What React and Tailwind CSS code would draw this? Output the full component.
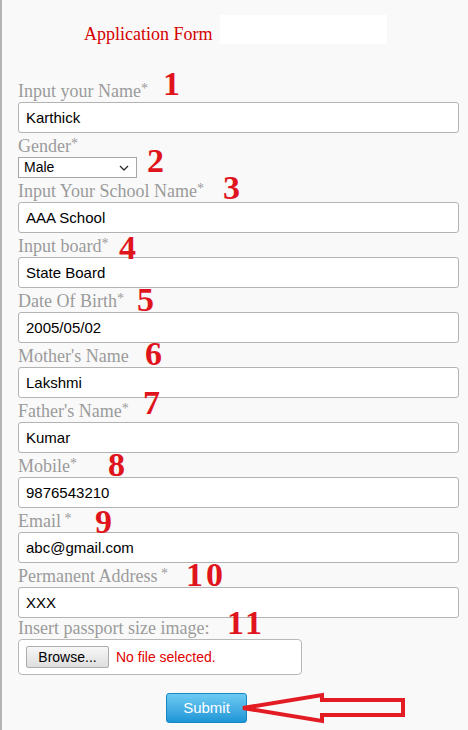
import React from "react";

const serif = "font-['Liberation_Serif',serif]";
const sans = "font-['Liberation_Sans',sans-serif]";

function Num({ children, cls }) {
  return (
    <span
      className={`absolute ${serif} font-bold text-[34px] leading-[34px] text-[#e0141c] ${cls}`}
    >
      {children}
    </span>
  );
}

function Label({ text, star, numCls, num, mt = "mt-[3px]" }) {
  return (
    <div
      className={`relative ${mt} h-[20px] whitespace-nowrap ${serif} text-[18px] leading-[20px] text-[#9b9b9b]`}
    >
      {text}
      {star && <span className="relative top-[-4px] text-[14px]">{star}</span>}
      {num && <Num cls={numCls}>{num}</Num>}
    </div>
  );
}

function Field({ value }) {
  return (
    <input
      readOnly
      defaultValue={value}
      className={`mt-px block h-[31px] w-full rounded-[3px] border border-[#b3b3b3] bg-white px-[7px] ${sans} text-[15px] text-black outline-none`}
    />
  );
}

export default function App() {
  return (
    <div className="min-h-[730px] w-[468px] border-l-2 border-[#b4b4b4] bg-[#f9f9f9] pl-[16px] pr-[9px]">
      <div className="flex h-[78px]">
        <div
          className={`ml-[66px] mt-[24px] w-[136px] whitespace-nowrap ${serif} text-[18px] leading-[20px] text-[#d40000]`}
        >
          Application Form
        </div>
        <div className="mt-[15px] h-[29px] w-[167px] bg-white" />
      </div>

      <Label text="Input your Name" star="*" num="1" numCls="left-[145px] top-[-14px]" />
      <Field value="Karthick" />

      <Label text="Gender" star="*" num="2" numCls="left-[129px] top-[8px]" />
      <div
        className={`mt-px mb-[2px] flex h-[21px] w-[119px] items-center justify-between border border-[#a6a6a6] bg-white pl-[5px] pr-[7px] ${sans} text-[14px] text-black`}
      >
        <span>Male</span>
        <svg width="10" height="6" viewBox="0 0 10 6" fill="none">
          <path d="M1 1l4 4 4-4" stroke="#333" strokeWidth="1.4" />
        </svg>
      </div>

      <Label text="Input Your School Name" star="*" num="3" numCls="left-[205px] top-[-10px]" />
      <Field value="AAA School" />

      <Label text="Input board" star="*" num="4" numCls="left-[101px] top-[-5px]" />
      <Field value="State Board" />

      <Label text="Date Of Birth" star="*" num="5" numCls="left-[119px] top-[-8px]" />
      <Field value="2005/05/02" />

      <Label text="Mother's Name" num="6" numCls="left-[127px] top-[-9px]" />
      <Field value="Lakshmi" />

      <Label text="Father's Name" star="*" num="7" numCls="left-[125px] top-[-15px]" />
      <Field value="Kumar" />

      <Label text="Mobile" star="*" num="8" numCls="left-[90px] top-[-8px]" />
      <Field value="9876543210" />

      <Label text="Email" star={"\u00a0*"} num="9" numCls="left-[77px] top-[-6px]" />
      <Field value="abc@gmail.com" />

      <Label text="Permanent Address" star={"\u00a0*"} num="10" numCls="left-[168px] top-[-8px] tracking-[3px]" />
      <Field value="XXX" />

      <Label
        text="Insert passport size image:"
        num="11"
        mt="mt-0"
        numCls="left-[209px] top-[-12px] tracking-[3px]"
      />
      <div
        className={`mt-px flex h-[36px] w-[284px] items-center rounded-[4px] border border-[#b8b8b8] bg-white pl-[7px] ${sans}`}
      >
        <div className="flex h-[22px] w-[83px] items-center justify-center rounded-[2px] border border-[#acacac] bg-linear-to-b from-[#f7f7f7] to-[#dedede] text-[14px] text-black">
          Browse...
        </div>
        <span className="ml-[7px] text-[14px] text-[#e00000]">No file selected.</span>
      </div>

      <div className="relative mt-[18px] h-[30px]">
        <div
          className={`ml-[148px] flex h-[30px] w-[81px] items-center justify-center rounded-[3px] border border-[#1a86c0] bg-linear-to-b from-[#6ccbf3] to-[#1a96d6] ${sans} text-[15px] text-white`}
        >
          Submit
        </div>
        <svg
          className="absolute left-[222px] top-[-1px]"
          width="170"
          height="34"
          viewBox="0 0 170 34"
          fill="none"
        >
          <polygon
            points="3,16 82,3 82,8 163,8 163,23 82,23 82,29"
            stroke="#e31b23"
            strokeWidth="4"
            strokeLinejoin="miter"
          />
        </svg>
      </div>
    </div>
  );
}
